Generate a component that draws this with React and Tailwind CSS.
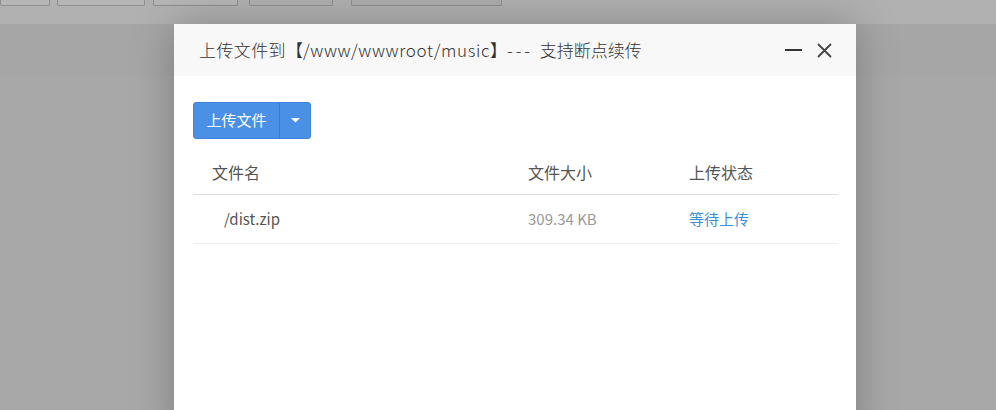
export default function App() {
  const font = { fontFamily: '"Noto Sans CJK SC", "Microsoft YaHei", "Noto Sans", sans-serif' };
  return (
    <div className="relative w-[996px] h-[410px] overflow-hidden bg-[#a8a8a8]" style={font}>
      {/* background page strip */}
      <div className="h-[24px] bg-[#b1b1b1] flex items-start">
        <div className="w-[50px] h-[6px] border border-t-0 border-[#8f8f8f] rounded-b-[2px] bg-[#b6b6b6]" />
        <div className="ml-[7px] w-[88px] h-[6px] border border-t-0 border-[#8f8f8f] rounded-b-[2px] bg-[#b6b6b6]" />
        <div className="ml-[8px] w-[85px] h-[6px] border border-t-0 border-[#8f8f8f] rounded-b-[2px] bg-[#b6b6b6]" />
        <div className="ml-[11px] w-[84px] h-[6px] border border-t-0 border-[#8f8f8f] rounded-b-[2px] bg-[#b0b0b0]" />
        <div className="ml-[18px] w-[151px] h-[6px] border border-t-0 border-[#8f8f8f] rounded-b-[2px] bg-[#adadad]" />
      </div>
      <div className="h-[52px] bg-[#a6a6a6]" />

      {/* dialog */}
      <div className="absolute left-[174px] top-[24px] w-[682px] h-[420px] bg-white shadow-[0_0_40px_rgba(0,0,0,0.25)]">
        <div className="h-[52px] bg-[#f8f8f8] flex items-center pl-[25px] pr-[24px]">
          <div className="flex-1 text-[17px] text-[#333] font-light whitespace-pre">
            <span className="tracking-[0.4px]">上传文件到</span>【<span className="tracking-[0.6px]">/www/wwwroot/music</span>】<span className="tracking-[3px]">--- </span>支持断点续传
          </div>
          <div className="flex items-center gap-[15px]">
            <div className="w-[17px] h-[2px] bg-[#333]" />
            <svg width="15" height="15" viewBox="0 0 15 15" className="text-[#444]">
              <path d="M1.5 1.5 L13.5 13.5 M13.5 1.5 L1.5 13.5" stroke="currentColor" strokeWidth="1.8" strokeLinecap="round" />
            </svg>
          </div>
        </div>
        <div className="pl-[19px] pr-[18px] pt-[26px]">
          <div className="flex w-[118px] h-[37px] rounded-[3px] bg-[#4a90e6] border border-[#3f84d8] text-white">
            <div className="w-[86px] flex items-center justify-center text-[15px] border-r border-[#3a7ccc]">上传文件</div>
            <div className="flex-1 flex items-center justify-center">
              <svg width="9" height="5" viewBox="0 0 9 5"><path d="M0 0 H9 L4.5 4.5 Z" fill="white" /></svg>
            </div>
          </div>
          <div className="mt-[14px]">
            <div className="h-[42px] pb-[4px] flex items-center border-b border-[#dddddd] text-[16px] text-[#555]">
              <div className="w-[335px] pl-[19px]">文件名</div>
              <div className="w-[161px]">文件大小</div>
              <div className="flex-1">上传状态</div>
            </div>
            <div className="h-[49px] flex items-center border-b border-[#eeeeee] text-[15px]">
              <div className="w-[335px] pl-[31px] text-[#555]">/dist.zip</div>
              <div className="w-[161px] text-[#999]">309.34 KB</div>
              <div className="flex-1 text-[#3d8fd8]">等待上传</div>
            </div>
          </div>
        </div>
      </div>
    </div>
  );
}
